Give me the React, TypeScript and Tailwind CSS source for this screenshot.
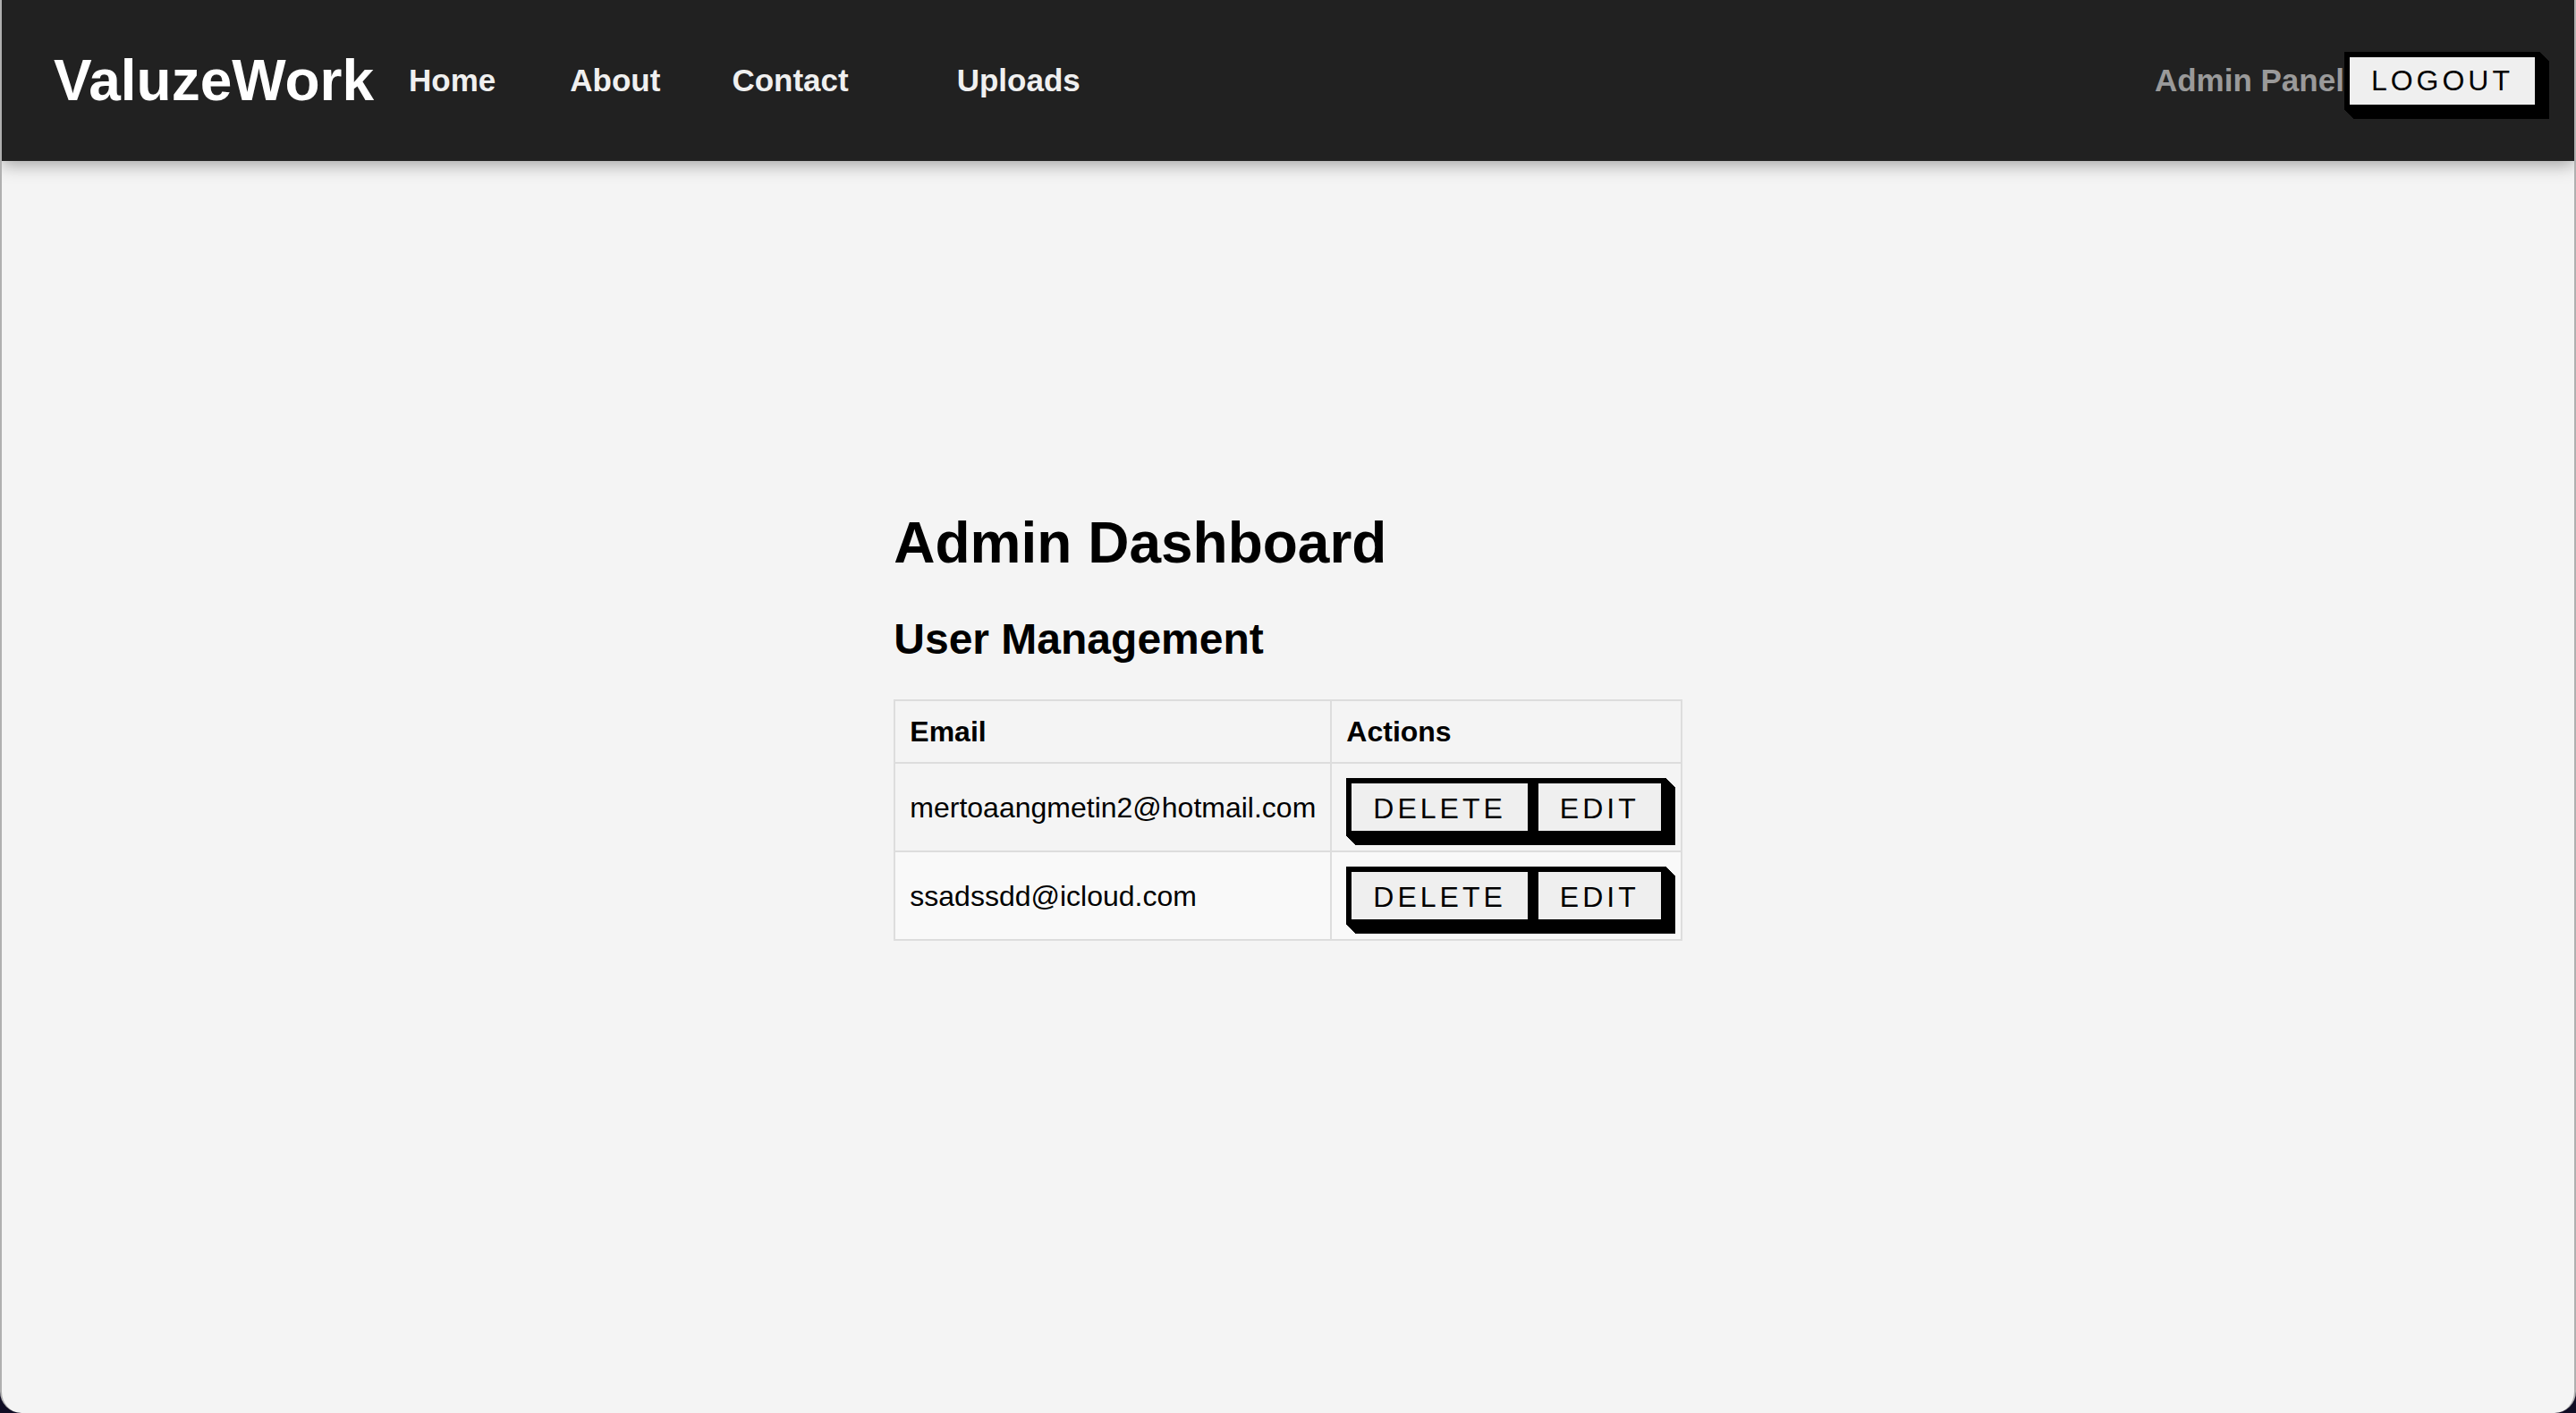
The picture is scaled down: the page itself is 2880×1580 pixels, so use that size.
import React from "react";

const font = { fontFamily: '"Liberation Sans", Arial, Helvetica, sans-serif' };

function RetroButton({ children, low }: { children: React.ReactNode; low?: boolean }) {
  return (
    <button
      className={
        "border-[6px] border-black bg-[#efefef] text-black text-[32px] leading-[37px] tracking-[4px] px-[24px] font-normal shadow-[1px_1px_0_#000,2px_2px_0_#000,3px_3px_0_#000,4px_4px_0_#000,5px_5px_0_#000,6px_6px_0_#000,7px_7px_0_#000,8px_8px_0_#000,9px_9px_0_#000,10px_10px_0_#000] " +
        (low ? "pt-[10px] pb-[6px]" : "py-[8px]")
      }
      style={font}
    >
      {children}
    </button>
  );
}

export default function App() {
  const users = ["mertoaangmetin2@hotmail.com", "ssadssdd@icloud.com"];
  return (
    <div className="w-full h-[1580px] bg-[#100d24]" style={font}>
      <div className="w-full h-full bg-[#f4f4f4] rounded-b-[24px] overflow-hidden flex flex-col border-x-2 border-[#4a4a4a]/40">
        <header className="h-[180px] shrink-0 bg-[#212121] flex items-center pl-[58px] pr-[38px] shadow-[0_4px_18px_rgba(0,0,0,0.35)] relative z-10">
          <div className="text-white text-[64px] font-bold leading-none">ValuzeWork</div>
          <nav className="flex items-center ml-[39px] text-[35px] font-bold text-[#f0f0f0]">
            <span>Home</span>
            <span className="ml-[83px]">About</span>
            <span className="ml-[80px]">Contact</span>
            <span className="ml-[121px]">Uploads</span>
          </nav>
          <div className="ml-auto flex items-center">
            <span className="text-[35px] font-bold text-[#9a9a9a]">Admin Panel</span>
            <RetroButton>LOGOUT</RetroButton>
          </div>
        </header>
        <main className="flex justify-center pt-[390px]">
          <div className="w-fit">
            <h1 className="text-[64px] font-bold leading-[74px] text-black">Admin Dashboard</h1>
            <h2 className="mt-[43px] text-[48px] font-bold leading-[55px] text-black">User Management</h2>
            <table className="mt-[40px] border-collapse text-[32px] text-black">
              <thead>
                <tr>
                  <th className="border-2 border-[#dddddd] px-[16px] py-[16px] text-left font-bold leading-[36px]">Email</th>
                  <th className="border-2 border-[#dddddd] px-[16px] py-[16px] text-left font-bold leading-[36px]">Actions</th>
                </tr>
              </thead>
              <tbody>
                {users.map((u, i) => (
                  <tr key={u} className={i % 2 === 1 ? "bg-[#f9f9f9]" : ""}>
                    <td className="border-2 border-[#dddddd] px-[16px] py-[16px] leading-[36px] align-middle">{u}</td>
                    <td className="border-2 border-[#dddddd] px-[16px] py-[16px] align-middle">
                      <div className="flex">
                        <RetroButton low>DELETE</RetroButton>
                        <RetroButton low>EDIT</RetroButton>
                      </div>
                    </td>
                  </tr>
                ))}
              </tbody>
            </table>
          </div>
        </main>
      </div>
    </div>
  );
}
